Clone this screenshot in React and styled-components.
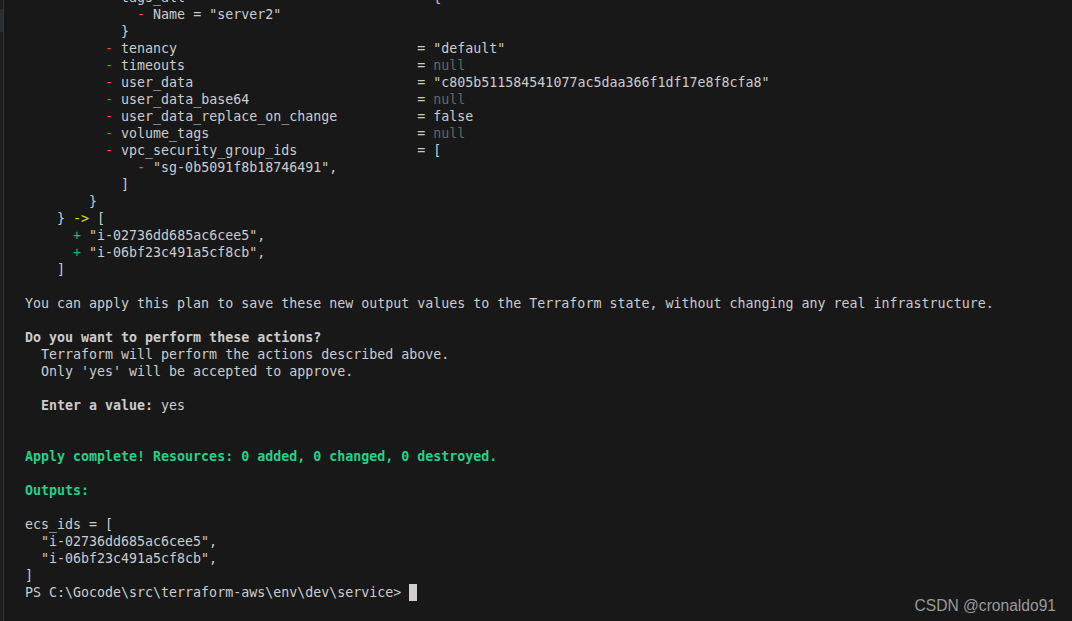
import React from "react";
import styled, { createGlobalStyle } from "styled-components";

const GlobalStyle = createGlobalStyle`
  html, body {
    margin: 0;
    padding: 0;
    background: #181818;
  }
`;

const COL = 37;

const Row = ({ k, v, tone }) => (
  <Line>
    {"          "}
    <Seg $tone="red">-</Seg>
    {" " + k.padEnd(COL) + "= "}
    <Seg $tone={tone}>{v}</Seg>
  </Line>
);

const App = () => {
  return (
    <Window>
      <GlobalStyle />
      <Gutter>
        <Sash />
      </Gutter>
      <Pane>
        <Output>
          <Row k="tags_all" v="{" />
          <Line>
            {"              "}
            <Seg $tone="red">-</Seg>
            {' Name = "server2"'}
          </Line>
          <Line>{"            }"}</Line>
          <Row k="tenancy" v={'"default"'} />
          <Row k="timeouts" v="null" tone="dim" />
          <Row k="user_data" v={'"c805b511584541077ac5daa366f1df17e8f8cfa8"'} />
          <Row k="user_data_base64" v="null" tone="dim" />
          <Row k="user_data_replace_on_change" v="false" />
          <Row k="volume_tags" v="null" tone="dim" />
          <Row k="vpc_security_group_ids" v="[" />
          <Line>
            {"              "}
            <Seg $tone="red">-</Seg>
            {' "sg-0b5091f8b18746491",'}
          </Line>
          <Line>{"            ]"}</Line>
          <Line>{"        }"}</Line>
          <Line>
            {"    } "}
            <Seg $tone="yellow">-&gt;</Seg>
            {" ["}
          </Line>
          <Line>
            {"      "}
            <Seg $tone="green">+</Seg>
            {' "i-02736dd685ac6cee5",'}
          </Line>
          <Line>
            {"      "}
            <Seg $tone="green">+</Seg>
            {' "i-06bf23c491a5cf8cb",'}
          </Line>
          <Line>{"    ]"}</Line>
          <Line />
          <Line>
            You can apply this plan to save these new output values to the Terraform state, without changing any real infrastructure.
          </Line>
          <Line />
          <Line $bold>Do you want to perform these actions?</Line>
          <Line>{"  Terraform will perform the actions described above."}</Line>
          <Line>{"  Only 'yes' will be accepted to approve."}</Line>
          <Line />
          <Line>
            {"  "}
            <Seg $bold>Enter a value:</Seg>
            {" yes"}
          </Line>
          <Line />
          <Line />
          <Line $bold $tone="success">
            Apply complete! Resources: 0 added, 0 changed, 0 destroyed.
          </Line>
          <Line />
          <Line $bold $tone="success">Outputs:</Line>
          <Line />
          <Line>ecs_ids = [</Line>
          <Line>{'  "i-02736dd685ac6cee5",'}</Line>
          <Line>{'  "i-06bf23c491a5cf8cb",'}</Line>
          <Line>]</Line>
          <Line>
            {"PS C:\\Gocode\\src\\terraform-aws\\env\\dev\\service> "}
            <Cursor />
          </Line>
        </Output>
        <Watermark>CSDN @cronaldo91</Watermark>
      </Pane>
    </Window>
  );
};

const tones = {
  red: "#f14c4c",
  dim: "#666666",
  yellow: "#e5e510",
  green: "#0dbc79",
  success: "#23d18b",
};

const Window = styled.div`
  display: flex;
  width: 1072px;
  height: 621px;
  overflow: hidden;
  background: #181818;
`;

const Gutter = styled.div`
  width: 3px;
  flex-shrink: 0;
  background: #1d1d1d;
  border-right: 1px solid #343434;
  padding-top: 9px;
`;

const Sash = styled.div`
  height: 23px;
  background: #2b2e30;
`;

const Pane = styled.div`
  position: relative;
  flex: 1;
  padding-left: 21px;
  overflow: hidden;
`;

const Output = styled.div`
  margin-top: -11.5px;
  font-family: "DejaVu Sans Mono", "Liberation Mono", monospace;
  font-size: 13.3px;
  color: #cccccc;
`;

const Line = styled.div`
  height: 17px;
  line-height: 17px;
  white-space: pre;
  font-weight: ${(p) => (p.$bold ? 700 : 400)};
  color: ${(p) => tones[p.$tone] || "inherit"};
`;

const Seg = styled.span`
  font-weight: ${(p) => (p.$bold ? 700 : "inherit")};
  color: ${(p) => tones[p.$tone] || "inherit"};
`;

const Cursor = styled.span`
  display: inline-block;
  width: 8px;
  height: 17px;
  vertical-align: top;
  background: #d0d0d0;
`;

const Watermark = styled.div`
  position: absolute;
  right: 16px;
  bottom: 6px;
  font-family: "Liberation Sans", Arial, sans-serif;
  font-size: 15.6px;
  color: #9a9a9a;
`;

export default App;
